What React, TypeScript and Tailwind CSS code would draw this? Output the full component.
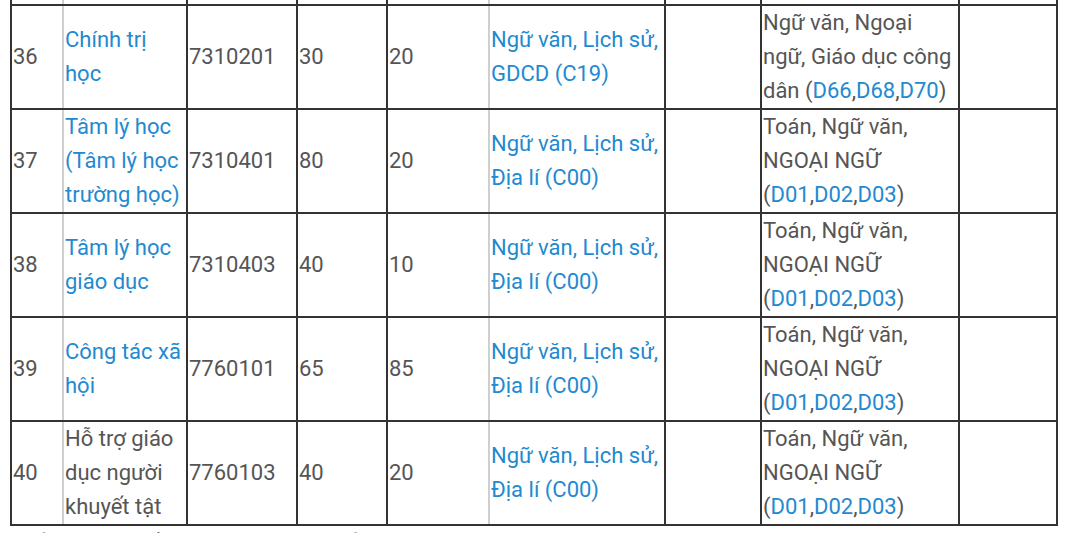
import { ReactNode } from "react";

interface Row {
  stt: string;
  name: ReactNode;
  nameLink: boolean;
  code: string;
  a: string;
  b: string;
  group1: ReactNode;
  group2: ReactNode;
}

const Blue = ({ children }: { children: ReactNode }) => (
  <span className="text-[#2389d0]">{children}</span>
);

const combo = (codes: string[]) => (
  <>
    (
    {codes.map((c, i) => (
      <span key={c}>
        <Blue>{c}</Blue>
        {i < codes.length - 1 ? "," : ""}
      </span>
    ))}
    )
  </>
);

const c00 = (
  <>
    Ngữ văn, Lịch sử,
    <br />
    Địa lí (C00)
  </>
);

const toan = (
  <>
    Toán, Ngữ văn,
    <br />
    NGOẠI NGỮ
    <br />
    {combo(["D01", "D02", "D03"])}
  </>
);

const rows: Row[] = [
  {
    stt: "36",
    name: (
      <>
        Chính trị
        <br />
        học
      </>
    ),
    nameLink: true,
    code: "7310201",
    a: "30",
    b: "20",
    group1: (
      <>
        Ngữ văn, Lịch sử,
        <br />
        GDCD (C19)
      </>
    ),
    group2: (
      <>
        Ngữ văn, Ngoại
        <br />
        ngữ, Giáo dục công
        <br />
        dân {combo(["D66", "D68", "D70"])}
      </>
    ),
  },
  {
    stt: "37",
    name: (
      <>
        Tâm lý học
        <br />
        (Tâm lý học
        <br />
        trường học)
      </>
    ),
    nameLink: true,
    code: "7310401",
    a: "80",
    b: "20",
    group1: c00,
    group2: toan,
  },
  {
    stt: "38",
    name: (
      <>
        Tâm lý học
        <br />
        giáo dục
      </>
    ),
    nameLink: true,
    code: "7310403",
    a: "40",
    b: "10",
    group1: c00,
    group2: toan,
  },
  {
    stt: "39",
    name: (
      <>
        Công tác xã
        <br />
        hội
      </>
    ),
    nameLink: true,
    code: "7760101",
    a: "65",
    b: "85",
    group1: c00,
    group2: toan,
  },
  {
    stt: "40",
    name: (
      <>
        Hỗ trợ giáo
        <br />
        dục người
        <br />
        khuyết tật
      </>
    ),
    nameLink: false,
    code: "7760103",
    a: "40",
    b: "20",
    group1: c00,
    group2: toan,
  },
];

const td = "border-2 border-[#333] p-0 pl-[1px] align-middle whitespace-nowrap";
const tdLight = "border-2 border-[#333] border-r-[#cfcfcf] p-0 pl-[1px] align-middle whitespace-nowrap";
const spacer = "border-2 border-t-0 border-[#333] p-0";
const spacerLight = "border-2 border-t-0 border-[#333] border-r-[#cfcfcf] p-0";

export default function App() {
  return (
    <div
      className="h-[533px] w-[1067px] overflow-hidden bg-white pl-[10px] text-[22px] leading-[34px] text-[#555]"
      style={{ fontFamily: "Roboto, 'Noto Sans', sans-serif" }}
    >
      <table className="w-[1046px] table-fixed border-collapse">
        <colgroup>
          <col className="w-[52px]" />
          <col className="w-[124px]" />
          <col className="w-[110px]" />
          <col className="w-[90px]" />
          <col className="w-[102px]" />
          <col className="w-[176px]" />
          <col className="w-[96px]" />
          <col className="w-[198px]" />
          <col className="w-[98px]" />
        </colgroup>
        <tbody>
          <tr className="h-[5px]">
            <td className={spacerLight} />
            <td className={spacer} />
            <td className={spacer} />
            <td className={spacer} />
            <td className={spacerLight} />
            <td className={spacer} />
            <td className={spacer} />
            <td className={spacer} />
            <td className={spacer} />
          </tr>
          {rows.map((r) => (
            <tr key={r.stt} className="h-[104px]">
              <td className={tdLight}>{r.stt}</td>
              <td className={td + (r.nameLink ? " text-[#2389d0]" : "")}>{r.name}</td>
              <td className={td}>{r.code}</td>
              <td className={td}>{r.a}</td>
              <td className={tdLight}>{r.b}</td>
              <td className={td + " text-[#2389d0]"}>{r.group1}</td>
              <td className={td} />
              <td className={td}>{r.group2}</td>
              <td className={td} />
            </tr>
          ))}
        </tbody>
      </table>
      <p className="pt-[1px]">(Đối tượng tuyển sinh: thí sinh đã tốt nghiệp THPT)</p>
    </div>
  );
}
